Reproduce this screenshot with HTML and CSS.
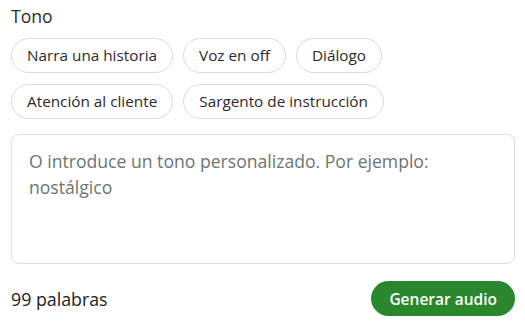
FILE: index.html
```html
<!DOCTYPE html>
<html lang="es">
<head>
<meta charset="utf-8">
<link rel="stylesheet" href="styles.css">
</head>
<body>
<div class="panel">
  <div class="label">Tono</div>
  <div class="chips">
    <button class="chip">Narra una historia</button>
    <button class="chip">Voz en off</button>
    <button class="chip">Diálogo</button>
    <button class="chip">Atención al cliente</button>
    <button class="chip">Sargento de instrucción</button>
  </div>
  <textarea class="tone" placeholder="O introduce un tono personalizado. Por ejemplo: nostálgico"></textarea>
  <div class="footer">
    <span class="count">99 palabras</span>
    <button class="generate">Generar audio</button>
  </div>
</div>
</body>
</html>
```
FILE: styles.css
```css
html, body {
  margin: 0;
  padding: 0;
  background: #ffffff;
}
body {
  font-family: "Open Sans", "Noto Sans", sans-serif;
  color: #222;
}
.panel {
  padding: 4px 10px 0 11px;
  display: flex;
  flex-direction: column;
}
.label {
  font-size: 17.6px;
  line-height: 25px;
  color: #2b2b2b;
}
.chips {
  display: flex;
  flex-wrap: wrap;
  gap: 11px 10px;
  margin-top: 9px;
  max-width: 400px;
}
.chip {
  font-family: inherit;
  font-size: 15.3px;
  color: #2b2b2b;
  background: #fff;
  border: 1px solid #dadada;
  border-radius: 18px;
  height: 35px;
  padding: 0 15px;
  line-height: 33px;
  cursor: pointer;
}
.tone {
  margin-top: 15px;
  height: 130px;
  box-sizing: border-box;
  border: 1px solid #d9dfdd;
  border-radius: 8px;
  padding: 13px 17px;
  font-family: inherit;
  font-size: 17.6px;
  line-height: 26px;
  resize: none;
  outline: none;
}
.tone::placeholder {
  color: #6c7570;
}
.footer {
  display: flex;
  justify-content: space-between;
  align-items: center;
  margin-top: 17px;
}
.count {
  font-size: 17.8px;
  color: #222;
}
.generate {
  font-family: inherit;
  font-size: 15.5px;
  font-weight: 600;
  color: #fff;
  background: #2a872e;
  border: none;
  border-radius: 18px;
  height: 35px;
  padding: 0 18px;
  cursor: pointer;
}
```
